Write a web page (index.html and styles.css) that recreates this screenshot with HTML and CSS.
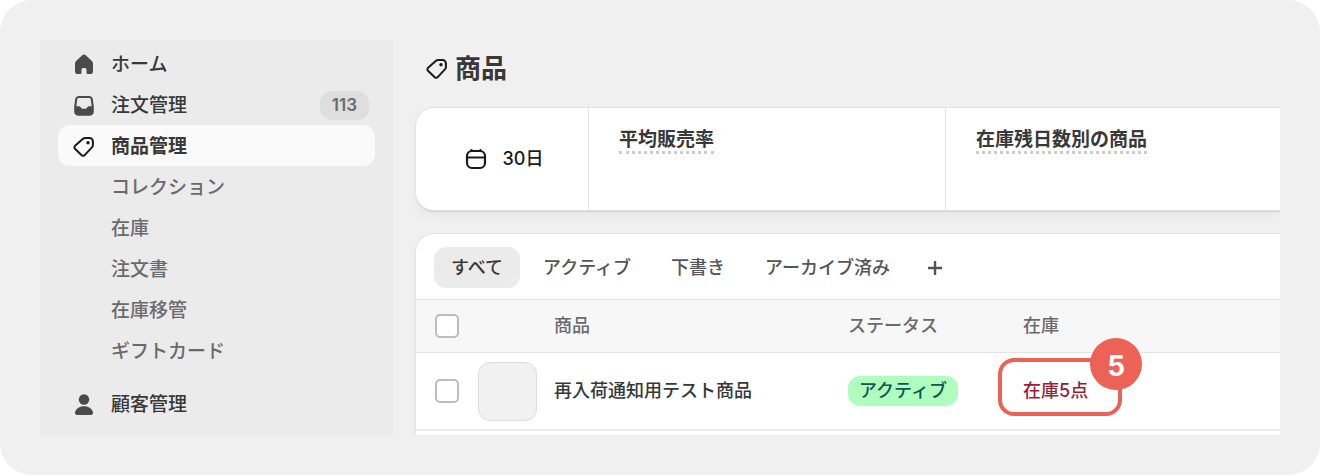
FILE: index.html
```html
<!DOCTYPE html>
<html lang="ja">
<head>
<meta charset="utf-8">
<meta name="viewport" content="width=device-width, initial-scale=1">
<title>商品</title>
<link rel="stylesheet" href="styles.css">
</head>
<body>
<svg class="sprite" aria-hidden="true">
  <symbol id="tag" viewBox="0 0 22 22">
    <path d="M12.4 1.900h4.100a3.400 3.400 0 0 1 3.400 3.400v3.600a3.600 3.600 0 0 1-1 2.500l-7.200 7.700a2.100 2.100 0 0 1-3 .1L2 12.700a2.100 2.100 0 0 1 .1-3L9.700 2.900a4 4 0 0 1 2.700-1z" fill="none" stroke="currentColor" stroke-width="2"/>
    <circle cx="15" cy="6.800" r="1.700" fill="currentColor"/>
  </symbol>
</svg>
<div class="frame">
  <nav class="sidebar">
    <a class="item" href="#">
      <svg class="icon" viewBox="0 0 22 22"><path d="M9.300 1.300a2.500 2.500 0 0 1 3.400 0l6.200 5.700c.7.700 1.100 1.500 1.100 2.500v7.700a2.800 2.800 0 0 1-2.800 2.800h-2.400a1.300 1.300 0 0 1-1.300-1.300v-3.200a1.500 1.500 0 0 0-1.500-1.500h-2a1.500 1.500 0 0 0-1.500 1.500v3.200a1.300 1.300 0 0 1-1.300 1.300H4.800A2.800 2.800 0 0 1 2 17.200V9.500c0-1 .4-1.800 1.100-2.500z" fill="currentColor"/></svg>
      ホーム
    </a>
    <a class="item" href="#">
      <svg class="icon" viewBox="0 0 22 22"><path fill-rule="evenodd" d="M5.600 1h10.800a3.400 3.400 0 0 1 3.300 2.600l1.100 7.600v5.400a4.100 4.100 0 0 1-4.100 4.100H5.300a4.100 4.100 0 0 1-4.100-4.100v-5.400l1.100-7.600A3.400 3.400 0 0 1 5.600 1zM5.700 3.100a1.400 1.400 0 0 0-1.400 1.200L3.300 11.200h2.500a2.500 2.500 0 0 1 2.100 1.200l.4.600c.3.400.7.700 1.300.7h2.800c.6 0 1-.3 1.300-.7l.4-.6a2.500 2.500 0 0 1 2.100-1.200h2.500l-1-6.900a1.400 1.400 0 0 0-1.400-1.200z" fill="currentColor"/></svg>
      注文管理
      <span class="count">113</span>
    </a>
    <a class="item current" href="#" aria-current="page">
      <svg class="icon"><use href="#tag"/></svg>
      商品管理
    </a>
    <a class="item sub" href="#">コレクション</a>
    <a class="item sub" href="#">在庫</a>
    <a class="item sub" href="#">注文書</a>
    <a class="item sub" href="#">在庫移管</a>
    <a class="item sub" href="#">ギフトカード</a>
    <a class="item group" href="#">
      <svg class="icon" viewBox="0 0 22 22"><circle cx="11" cy="5.500" r="5.200" fill="currentColor"/><path d="M2 18.600C2.600 14.800 6.300 12.300 11 12.300s8.400 2.500 9 6.300c.2 1.300-.6 2.300-1.800 2.300H3.800c-1.200 0-2-1-1.800-2.300z" fill="currentColor"/></svg>
      顧客管理
    </a>
  </nav>
  <main class="main">
    <h1 class="title"><svg class="icon"><use href="#tag"/></svg>商品</h1>
    <section class="card stats">
      <button class="period" type="button">
        <svg class="icon" viewBox="0 0 22 22" fill="none" stroke="currentColor" stroke-width="2.200" stroke-linecap="round"><rect x="2" y="3" width="18" height="17" rx="5"/><path d="M2 9.500h18M6.500 2v1M15.500 2v1"/></svg>
        30日
      </button>
      <div class="stat"><span class="metric">平均販売率</span></div>
      <div class="stat"><span class="metric">在庫残日数別の商品</span></div>
    </section>
    <section class="card list">
      <div class="tabs">
        <button class="tab active" type="button">すべて</button>
        <button class="tab" type="button">アクティブ</button>
        <button class="tab" type="button">下書き</button>
        <button class="tab" type="button">アーカイブ済み</button>
        <button class="tab add" type="button" aria-label="ビューを追加"><svg class="plus" viewBox="0 0 16 16"><path d="M8 1v14M1 8h14" stroke="currentColor" stroke-width="2.400"/></svg></button>
      </div>
      <table class="products">
        <colgroup><col class="col-check"><col class="col-thumb"><col class="col-name"><col class="col-status"><col></colgroup>
        <thead>
          <tr><th><input class="check" type="checkbox" aria-label="すべての商品を選択"></th><th></th><th>商品</th><th>ステータス</th><th>在庫</th></tr>
        </thead>
        <tbody>
          <tr>
            <td><input class="check" type="checkbox" aria-label="再入荷通知用テスト商品を選択"></td>
            <td><div class="thumb"></div></td>
            <td>再入荷通知用テスト商品</td>
            <td><span class="status">アクティブ</span></td>
            <td><span class="stock">在庫5点<span class="callout"><span class="step">5</span></span></span></td>
          </tr>
        </tbody>
      </table>
    </section>
  </main>
</div>
</body>
</html>
```

FILE: styles.css
```css
* { box-sizing: border-box; }

body {
  margin: 0;
  background: #fff;
  color: #383838;
  font: 500 18px/28px Inter, "Noto Sans CJK JP", sans-serif;
}

button {
  border: 0;
  background: none;
  color: inherit;
  font: inherit;
}

.sprite { display: none; }

.frame {
  display: flex;
  padding: 40px;
  border-radius: 32px;
  background: #f0f0f0;
}

.icon {
  flex: none;
  width: 22px;
  height: 22px;
}

/* Sidebar */
.sidebar {
  flex: none;
  width: 353px;
  padding: 3px 18px 10px;
  background: #ebebeb;
}

.item {
  display: flex;
  align-items: center;
  gap: 16px;
  height: 41px;
  padding: 2px 6px 0 15px;
  border-radius: 12px;
  color: #383838;
  font-size: 19px;
  text-decoration: none;
}

.item .icon { color: #4a4a4a; }
.item.current { background: #fafafa; font-weight: 700; }
.item.current .icon { color: #1a1a1a; }
.item.sub { padding-left: 53px; color: #6a6a6a; }
.item.group { margin-top: 12px; }

.count {
  margin-left: auto;
  padding: 0 12px;
  border-radius: 12px;
  background: #dedede;
  color: #6a6a6a;
  font-size: 17px;
  font-weight: 600;
  line-height: 29px;
}

/* Main column */
.main {
  flex: 1;
  min-width: 0;
  padding-left: 23px;
  overflow: hidden;
}

.title {
  display: flex;
  align-items: center;
  gap: 7px;
  margin: 10px 0 20px;
  padding-left: 10px;
  font-size: 26px;
  font-weight: 700;
  line-height: 38px;
}

.title .icon { color: #1a1a1a; }

.card {
  border-radius: 18px 0 0 18px;
  background: #fff;
  box-shadow: 0 0 0 1px #e3e3e3, 0 2px 1px #cfcfcf, 0 5px 8px #e6e6e6;
}

.stats {
  display: grid;
  grid-template-columns: 172px 357px 1fr;
  min-height: 102px;
}

.period {
  display: flex;
  align-items: center;
  justify-content: center;
  gap: 16px;
  padding: 0 0 0 4px;
  color: #1a1a1a;
}

.stat {
  padding: 21px 30px;
  border-left: 1px solid #e3e3e3;
}

.metric {
  display: block;
  width: fit-content;
  border-bottom: 3px dotted #ccc;
  font-size: 19px;
  font-weight: 700;
  line-height: 22px;
}

.list {
  margin-top: 24px;
  padding-bottom: 4px;
  border-radius: 18px 0 0 0;
}

.tabs {
  display: flex;
  gap: 6px;
  padding: 13px 18px 11px;
}

.tab {
  display: flex;
  align-items: center;
  height: 41px;
  padding: 0 17px;
  border-radius: 12px;
  color: #555;
}

.tab.active { background: #ebebeb; color: #383838; }
.tab.add { padding: 0 14px; }

.plus { width: 16px; height: 16px; }

.products {
  width: 100%;
  border-collapse: separate;
  border-spacing: 0;
  table-layout: fixed;
}

.col-check { width: 62px; }
.col-thumb { width: 76px; }
.col-name { width: 294px; }
.col-status { width: 175px; }

.products th,
.products td {
  padding: 0;
  font-weight: 500;
  text-align: left;
  vertical-align: middle;
}

.products th {
  height: 54px;
  border-top: 1px solid #e3e3e3;
  border-bottom: 1px solid #e3e3e3;
  background: #f7f7f7;
  color: #6a6a6a;
}

.products td {
  height: 78px;
  border-bottom: 2px solid #ebebeb;
}

.check {
  display: block;
  width: 24px;
  height: 24px;
  margin: 0 0 0 19px;
  border: 2px solid #bdbdbd;
  border-radius: 5px;
  background: #fff;
  appearance: none;
}

.thumb {
  width: 59px;
  height: 59px;
  border: 1px solid #dcdcdc;
  border-radius: 12px;
  background: #f1f1f1;
}

.status {
  display: inline-block;
  padding: 0 11px;
  border-radius: 12px;
  background: #affebf;
  color: #14584c;
  line-height: 30px;
}

.products .stock {
  position: relative;
  display: inline-block;
  color: #9a1c36;
}

/* Numbered highlight over the stock value */
.callout {
  position: absolute;
  inset: -19px -34px -11px -25px;
  border: 4px solid #ed6257;
  border-radius: 16px;
}

.step {
  position: absolute;
  top: -24px;
  right: -24px;
  width: 52px;
  height: 52px;
  border-radius: 50%;
  background: #ed6257;
  color: #fff;
  font-size: 28px;
  font-weight: 700;
  line-height: 56px;
  text-align: center;
}
```
